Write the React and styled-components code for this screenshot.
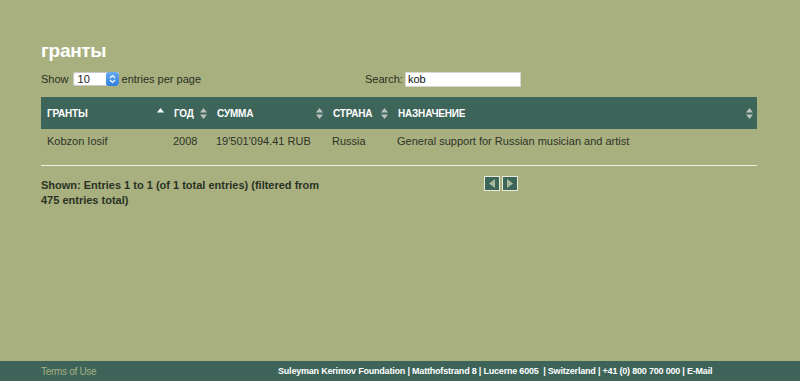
import React from 'react';
import styled, { createGlobalStyle } from 'styled-components';

const GlobalStyle = createGlobalStyle`
  html, body {
    margin: 0;
    padding: 0;
    background: #a8b080;
    font-family: "Liberation Sans", Arial, sans-serif;
  }
`;

const Page = styled.div`
  display: flex;
  flex-direction: column;
  min-height: 381px;
  width: 800px;
`;

const Main = styled.div`
  flex: 1;
  padding: 40px 43px 0 41px;
`;

const Title = styled.h1`
  margin: 0 0 9px 0;
  font-size: 19px;
  font-weight: bold;
  color: #ffffff;
  letter-spacing: -0.3px;
  line-height: 22px;
`;

const Controls = styled.div`
  display: flex;
  align-items: center;
  height: 16px;
  font-size: 11px;
  color: #2a2f22;
  margin-bottom: 10px;
`;

const Length = styled.div`
  display: flex;
  align-items: center;
  width: 324px;
`;

const Select = styled.div`
  display: flex;
  align-items: center;
  margin: 0 3px 0 4px;
  width: 46px;
  height: 14px;
  background: #ffffff;
  border-radius: 3px;
  overflow: hidden;
  box-shadow: inset 0 0 0 1px #c8c8c8;
`;

const SelectValue = styled.span`
  flex: 1;
  padding-left: 5px;
  font-size: 11px;
  color: #222;
`;

const SelectArrows = styled.span`
  display: flex;
  align-items: center;
  justify-content: center;
  width: 13px;
  height: 14px;
  background: linear-gradient(#6aaaf0, #2d7fe0);
  border-radius: 3px;
`;

const SearchInput = styled.div`
  margin-left: 2px;
  width: 112px;
  height: 13px;
  background: #ffffff;
  border: 1px solid #d8d8d0;
  font-size: 11px;
  line-height: 13px;
  padding-left: 2px;
  color: #111;
`;

const Table = styled.div`
  display: flex;
  flex-direction: column;
`;

const HeadRow = styled.div`
  display: grid;
  grid-template-columns: 127px 43px 116px 65px 1fr;
  height: 32px;
  background: #3e655a;
`;

const HeadCell = styled.div`
  display: flex;
  align-items: center;
  justify-content: space-between;
  padding: 0 4px 0 6px;
  font-size: 10px;
  font-weight: bold;
  color: #ffffff;
  letter-spacing: -0.2px;
`;

const Row = styled.div`
  display: grid;
  grid-template-columns: 127px 43px 116px 65px 1fr;
  height: 24px;
  align-items: center;
  font-size: 11px;
  color: #2e3326;
`;

const Cell = styled.div`
  padding-left: ${({ $pad }) => $pad || 6}px;
  white-space: nowrap;
`;

const Divider = styled.div`
  height: 1px;
  background: #eef0e0;
  margin-top: 12px;
`;

const Footerline = styled.div`
  display: flex;
  align-items: flex-start;
  margin-top: 10px;
`;

const Info = styled.div`
  width: 285px;
  padding-top: 2px;
  font-size: 11px;
  font-weight: bold;
  line-height: 15px;
  color: #2a3323;
`;

const Pager = styled.div`
  display: flex;
  gap: 2px;
  margin-left: 158px;
`;

const PageButton = styled.div`
  width: 14px;
  height: 13px;
  background: #3e655a;
  border: 1px solid #e8ecd8;
  display: flex;
  align-items: center;
  justify-content: center;
`;

const Footer = styled.div`
  height: 20px;
  background: #3e645a;
  display: flex;
  align-items: center;
  padding: 0 0 0 41px;
  font-size: 9px;
`;

const Terms = styled.span`
  color: #a8b080;
  font-size: 10px;
  letter-spacing: -0.3px;
  width: 237px;
`;

const Address = styled.span`
  color: #ffffff;
  font-weight: bold;
  letter-spacing: -0.2px;
`;

const SortBoth = () => (
  <svg width="7" height="11" viewBox="0 0 7 11">
    <path d="M3.5 0 L7 4.5 H0 Z" fill="#b9c4bf" />
    <path d="M3.5 11 L7 6.5 H0 Z" fill="#b9c4bf" />
  </svg>
);

const SortAsc = () => (
  <svg width="7" height="11" viewBox="0 0 7 11">
    <path d="M3.5 0 L7 4.5 H0 Z" fill="#ffffff" />
  </svg>
);

const Arrow = ({ dir }) => (
  <svg width="8" height="9" viewBox="0 0 8 9">
    {dir === 'left' ? (
      <path d="M1 4.5 L7 0 V9 Z" fill="#a8b89a" />
    ) : (
      <path d="M7 4.5 L1 0 V9 Z" fill="#a8b89a" />
    )}
  </svg>
);

const columns = [
  { label: 'ГРАНТЫ', asc: true },
  { label: 'ГОД' },
  { label: 'СУММА' },
  { label: 'СТРАНА' },
  { label: 'НАЗНАЧЕНИЕ' },
];

const App = () => {
  return (
    <Page>
      <GlobalStyle />
      <Main>
        <Title>гранты</Title>
        <Controls>
          <Length>
            Show
            <Select>
              <SelectValue>10</SelectValue>
              <SelectArrows>
                <svg width="7" height="10" viewBox="0 0 7 10">
                  <path d="M1 4 L3.5 1.5 L6 4 M1 6 L3.5 8.5 L6 6" stroke="#fff" strokeWidth="1.2" fill="none" />
                </svg>
              </SelectArrows>
            </Select>
            entries per page
          </Length>
          Search:
          <SearchInput>kob</SearchInput>
        </Controls>
        <Table>
          <HeadRow>
            {columns.map((c) => (
              <HeadCell key={c.label}>
                {c.label}
                {c.asc ? <SortAsc /> : <SortBoth />}
              </HeadCell>
            ))}
          </HeadRow>
          <Row>
            <Cell>Kobzon Iosif</Cell>
            <Cell $pad={5}>2008</Cell>
            <Cell $pad={5}>19'501'094.41 RUB</Cell>
            <Cell $pad={5}>Russia</Cell>
            <Cell $pad={5}>General support for Russian musician and artist</Cell>
          </Row>
        </Table>
        <Divider />
        <Footerline>
          <Info>Shown: Entries 1 to 1 (of 1 total entries) (filtered from 475 entries total)</Info>
          <Pager>
            <PageButton>
              <Arrow dir="left" />
            </PageButton>
            <PageButton>
              <Arrow dir="right" />
            </PageButton>
          </Pager>
        </Footerline>
      </Main>
      <Footer>
        <Terms>Terms of Use</Terms>
        <Address>
          Suleyman Kerimov Foundation | Matthofstrand 8 | Lucerne 6005 &nbsp;| Switzerland | +41 (0) 800 700 000 | E-Mail
        </Address>
      </Footer>
    </Page>
  );
};

export default App;
